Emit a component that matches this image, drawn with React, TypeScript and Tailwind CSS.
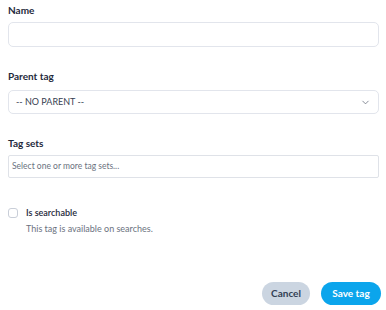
import React from 'react';
import { ChevronDown } from 'lucide-react';

const App: React.FC = () => {
  return (
    <div
      className="w-[386px] h-[310px] bg-white pl-2 pr-[7px] pt-[3px] text-[#1e293b]"
      style={{ fontFamily: 'Lato, "Noto Sans", sans-serif' }}
    >
      <label className="block h-[14px] text-[10px] leading-[14px] font-bold">Name</label>
      <input
        type="text"
        className="mt-[5px] block w-full h-[25px] rounded-[5px] border border-[#e2e5ec] bg-white px-2 text-[10px] outline-none"
      />

      <label className="mt-[22px] block h-[14px] text-[10px] leading-[14px] font-bold">Parent tag</label>
      <div className="mt-[7px] flex h-[24px] w-full items-center justify-between rounded-[5px] border border-[#e2e5ec] bg-white pl-[7px] pr-[7px]">
        <span className="text-[9px] text-[#374151]">-- NO PARENT --</span>
        <ChevronDown size={11} strokeWidth={1.75} className="text-[#6b7280]" />
      </div>

      <label className="mt-[22px] block h-[14px] text-[10px] leading-[14px] font-bold">Tag sets</label>
      <div className="mt-[5px] flex h-[23px] w-full items-center rounded-[2px] border border-[#dfe2e8] bg-white px-[3px]">
        <span className="text-[8.5px] text-[#6b7280]">Select one or more tag sets...</span>
      </div>

      <div className="mt-[28px] flex h-[14px] items-center">
        <span className="block h-[10px] w-[10px] rounded-[3px] border border-[#c9ced8] bg-white" />
        <span className="ml-[8px] text-[9px] font-semibold leading-[14px]">Is searchable</span>
      </div>
      <p className="ml-[18px] mt-[2px] h-[14px] text-[9px] leading-[14px] text-[#6b7280]">
        This tag is available on searches.
      </p>

      <div className="mt-[46px] -mr-[2px] flex justify-end gap-[11px]">
        <button className="h-[23px] w-[48px] rounded-full bg-[#cbd5e1] text-[10px] font-bold text-[#334155]">
          Cancel
        </button>
        <button className="h-[23px] w-[60px] rounded-full bg-[#0ba5ec] text-[10px] font-bold text-white">
          Save tag
        </button>
      </div>
    </div>
  );
};

export default App;
